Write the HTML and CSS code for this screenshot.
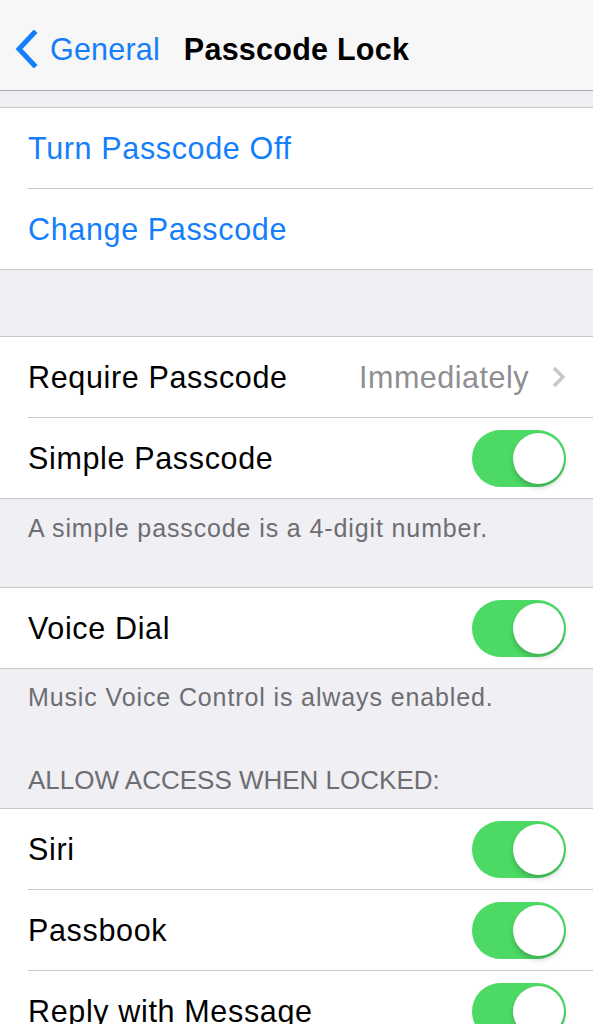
FILE: index.html
```html
<!DOCTYPE html>
<html lang="en">
<head>
    <meta charset="UTF-8">
    <meta name="viewport" content="width=device-width, initial-scale=1.0">
    <title>Passcode Lock</title>
    <link rel="stylesheet" href="styles.css">
</head>
<body>
    <header class="nav">
        <a class="nav-back" href="#">
            <svg class="nav-chevron" width="24" height="38" viewBox="0 0 24 38">
                <path d="M20 3 L5 19 L20 35" fill="none" stroke="currentColor" stroke-width="5" stroke-linecap="square" stroke-linejoin="miter"/>
            </svg>
            <span>General</span>
        </a>
        <h1 class="nav-title">Passcode Lock</h1>
        <div></div>
    </header>

    <main class="settings">
        <section class="group">
            <div class="row"><span class="label link">Turn Passcode Off</span></div>
            <div class="row"><span class="label link">Change Passcode</span></div>
        </section>

        <section class="group spaced">
            <div class="row">
                <span class="label">Require Passcode</span>
                <span class="detail">
                    Immediately
                    <svg class="disclosure" width="15" height="22" viewBox="0 0 15 22">
                        <path d="M3 2 L12 11 L3 20" fill="none" stroke="currentColor" stroke-width="3.4"/>
                    </svg>
                </span>
            </div>
            <div class="row">
                <span class="label">Simple Passcode</span>
                <span class="switch on"><span class="knob"></span></span>
            </div>
        </section>
        <p class="footer">A simple passcode is a 4-digit number.</p>

        <section class="group">
            <div class="row">
                <span class="label">Voice Dial</span>
                <span class="switch on"><span class="knob"></span></span>
            </div>
        </section>
        <p class="footer short">Music Voice Control is always enabled.</p>
        <h2 class="section-header">Allow Access When Locked:</h2>

        <section class="group">
            <div class="row">
                <span class="label">Siri</span>
                <span class="switch on"><span class="knob"></span></span>
            </div>
            <div class="row">
                <span class="label">Passbook</span>
                <span class="switch on"><span class="knob"></span></span>
            </div>
            <div class="row">
                <span class="label">Reply with Message</span>
                <span class="switch on"><span class="knob"></span></span>
            </div>
        </section>
    </main>
</body>
</html>
```

FILE: styles.css
```css
body {
    font-family: 'Liberation Sans', Arial, sans-serif;
    margin: 0;
    padding: 0;
    background: #efeff4;
    color: #000;
    overflow: hidden;
}

/* Navigation bar */
.nav {
    box-sizing: border-box;
    height: 91px;
    padding-top: 8px;
    background: #f7f7f7;
    border-bottom: 1px solid #a9a9ad;
    display: grid;
    grid-template-columns: 1fr auto 1fr;
    align-items: center;
}

.nav-back {
    display: flex;
    align-items: center;
    gap: 12px;
    padding-left: 14px;
    color: #147efb;
    text-decoration: none;
    font-size: 30.5px;
    letter-spacing: 0.2px;
}

.nav-chevron {
    display: block;
}

.nav-title {
    margin: 0;
    font-size: 30.5px;
    font-weight: 700;
    letter-spacing: 0.25px;
}

/* Grouped table */
.settings {
    padding-top: 16px;
}

.group {
    background: #fff;
    border-top: 1px solid #c8c7cc;
    border-bottom: 1px solid #c8c7cc;
}

.group.spaced {
    margin-top: 66px;
}

.row {
    height: 80px;
    margin-left: 28px;
    padding-right: 27px;
    display: flex;
    align-items: center;
    justify-content: space-between;
}

.row + .row {
    border-top: 1px solid #c8c7cc;
}

.label {
    font-size: 30.5px;
    letter-spacing: 0.65px;
}

.label.link {
    color: #147efb;
}

.detail {
    display: flex;
    align-items: center;
    gap: 22px;
    color: #8e8e93;
    font-size: 30.5px;
    letter-spacing: 0.5px;
}

.disclosure {
    color: #c7c7cc;
}

.footer {
    margin: 0;
    padding: 14px 28px 44px;
    color: #6d6d72;
    font-size: 25px;
    line-height: 30px;
    letter-spacing: 0.88px;
}

.footer.short {
    padding-top: 13px;
    padding-bottom: 0;
}

.section-header {
    margin: 53px 0 0;
    padding: 0 28px 13px;
    color: #6d6d72;
    font-size: 26px;
    font-weight: 400;
    line-height: 30px;
    text-transform: uppercase;
    letter-spacing: 0;
}

/* Toggle switch */
.switch {
    position: relative;
    width: 94px;
    height: 57px;
    border-radius: 29px;
    background: #e5e5ea;
}

.switch.on {
    background: #4cd964;
}

.knob {
    position: absolute;
    top: 3px;
    right: 2px;
    width: 51px;
    height: 51px;
    border-radius: 50%;
    background: #fff;
    box-shadow: 0 4px 5px rgba(0, 0, 0, 0.18), 0 0 1px rgba(0, 0, 0, 0.15);
}
```
